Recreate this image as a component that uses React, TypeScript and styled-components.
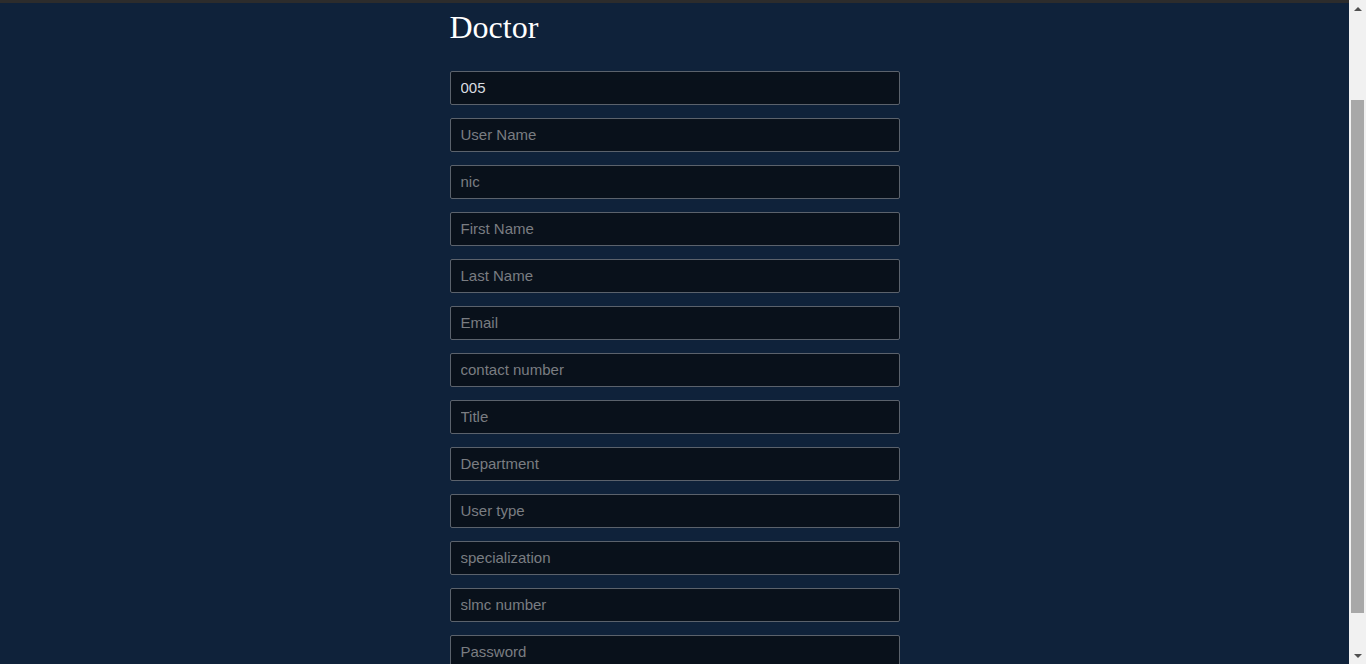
import React, { useEffect } from "react";
import styled, { createGlobalStyle } from "styled-components";

const Global = createGlobalStyle`
  html, body { margin: 0; padding: 0; background: #0f223a; }
  body { font-family: "Liberation Sans", Arial, sans-serif; }
  html { scrollbar-width: none; }
  ::-webkit-scrollbar { display: none; }
`;

const Page = styled.div`
  padding-right: 17px;
`;

const TopBar = styled.div`
  height: 111px;
  background: #2c2c2c;
`;

const Main = styled.main`
  width: 450px;
  margin: 0 auto;
  padding: 6px 0 42px;
`;

const Title = styled.h1`
  margin: 0 0 25px;
  font-family: "Liberation Serif", "Times New Roman", serif;
  font-weight: 400;
  font-size: 32px;
  line-height: 37px;
  color: #ffffff;
`;

const Form = styled.form`
  display: flex;
  flex-direction: column;
  gap: 13px;
`;

const Field = styled.input`
  box-sizing: border-box;
  width: 450px;
  height: 34px;
  padding: 0 10px 2px;
  background: #09111b;
  border: 1px solid #5b626c;
  border-radius: 2px;
  color: #d8dbe0;
  font-family: "Liberation Sans", Arial, sans-serif;
  font-size: 15px;
  outline: none;
  &::placeholder { color: #7a7d82; }
`;

/* fake browser scrollbar, drawn over the page edge */
const ScrollBar = styled.div`
  position: fixed;
  top: 0;
  right: 0;
  width: 17px;
  height: 100vh;
  background: #f1f1f1;
  display: flex;
  flex-direction: column;
`;

const Arrow = styled.div`
  height: 17px;
  display: flex;
  align-items: center;
  justify-content: center;
  flex: none;
`;

const Track = styled.div`
  flex: 1;
  padding: 83px 2px 0;
`;

const Thumb = styled.div`
  height: 513px;
  background: #a8a8a8;
`;

const fields = [
  "User Name",
  "nic",
  "First Name",
  "Last Name",
  "Email",
  "contact number",
  "Title",
  "Department",
  "User type",
  "specialization",
  "slmc number",
  "Password",
];

export default function App() {
  useEffect(() => {
    window.scrollTo(0, 108);
  }, []);
  return (
    <>
      <Global />
      <Page>
        <TopBar />
        <Main>
          <Title>Doctor</Title>
          <Form onSubmit={(e) => e.preventDefault()}>
            <Field defaultValue="005" />
            {fields.map((f) => (
              <Field key={f} placeholder={f} type={f === "Password" ? "password" : "text"} />
            ))}
          </Form>
        </Main>
      </Page>
      <ScrollBar>
        <Arrow>
          <svg width="8" height="4" viewBox="0 0 8 4"><path d="M0 4 L4 0 L8 4 Z" fill="#505050" /></svg>
        </Arrow>
        <Track>
          <Thumb />
        </Track>
        <Arrow>
          <svg width="8" height="4" viewBox="0 0 8 4"><path d="M0 0 L4 4 L8 0 Z" fill="#505050" /></svg>
        </Arrow>
      </ScrollBar>
    </>
  );
}
